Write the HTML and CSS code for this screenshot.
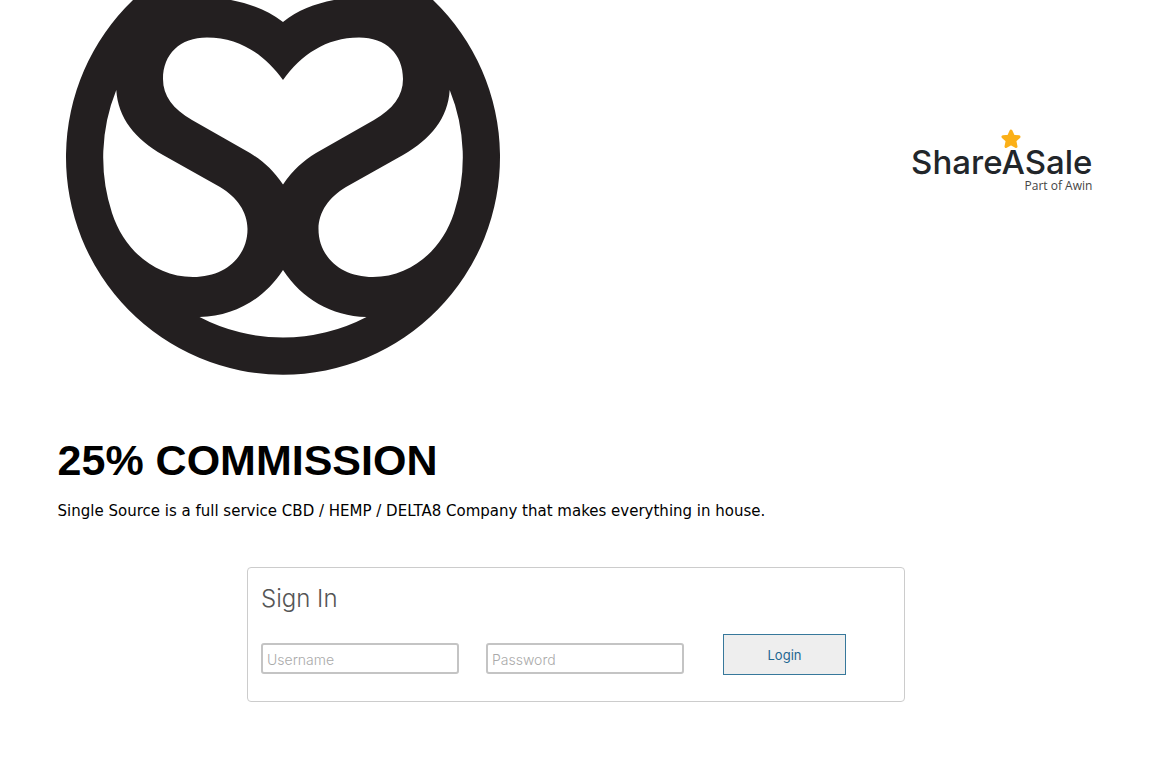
FILE: index.html
```
<!DOCTYPE html>
<html lang="en">
<head>
<meta charset="utf-8">
<title>Single Source | ShareASale</title>
<link rel="stylesheet" href="styles.css">
</head>
<body>
<div class="page">
  <header class="header">
    <svg class="merchant-logo" viewBox="0 0 450 376" role="img" aria-label="Single Source">
      <path fill="#231f20" fill-rule="evenodd" d="M75 0A217 217.500 0 1 0 375 0H276C256 4 240 10 225 22C209 10 193 4 173 0Z
        M225 80C207 55 182 37.500 149 37.500C122 37.500 105 54 105 79C105 96 115 109 134 120L192 153C205 161 215 170 225 184.500C235 170 245 161 258 153L316 120C335 109 345 96 345 79C345 54 328 37.500 301 37.500C268 37.500 243 55 225 80Z
        M58.300 90A180 180 0 0 0 54 213C66 250 97 277 135 277C168 277 189.500 256 189.500 229C189.500 212 179 197 162 187L105 155C77 139 60 118 58.300 90Z
        M391.700 90A180 180 0 0 1 396 213C384 250 353 277 315 277C282 277 260.500 256 260.500 229C260.500 212 271 197 288 187L345 155C373 139 390 118 391.700 90Z
        M225 270C206 299 177 316 141.500 317A180 180 0 0 0 308.500 317C273 316 244 299 225 270Z"/>
    </svg>
    <div class="network">
      <svg class="star" viewBox="0 0 20 20" aria-hidden="true">
        <path d="M10 2L12.300 7.200L18 7.800L13.800 11.600L15 17.500L10 14.700L5 17.500L6.200 11.600L2 7.800L7.700 7.200Z" fill="#fbb018" stroke="#fbb018" stroke-width="3" stroke-linejoin="round"/>
      </svg>
      <div class="network-name">ShareASale</div>
      <div class="network-note">Part of Awin</div>
    </div>
  </header>
  <main>
    <h1 class="offer">25% COMMISSION</h1>
    <p class="summary">Single Source is a full service CBD / HEMP / DELTA8 Company that makes everything in house.</p>
    <form class="signin">
      <h2 class="signin-title">Sign In</h2>
      <div class="signin-row">
        <input class="field" type="text" placeholder="Username" aria-label="Username">
        <input class="field" type="password" placeholder="Password" aria-label="Password">
        <button class="login" type="button">Login</button>
      </div>
    </form>
  </main>
</div>
</body>
</html>
```
FILE: styles.css
```
* { box-sizing: border-box; }
body {
  margin: 0;
  background: #fff;
  color: #000;
  font-family: Verdana, "DejaVu Sans", sans-serif;
}
.page { padding: 0 5%; }
.header {
  display: flex;
  justify-content: space-between;
  align-items: flex-start;
}
.merchant-logo { display: block; width: 450px; height: 376px; }
.network {
  display: flex;
  flex-direction: column;
  align-items: flex-end;
  margin-top: 129px;
  padding-right: 2px;
}
.star { display: block; width: 20px; height: 20px; margin-right: 71px; }
.network-name {
  margin-top: -2px;
  font: 500 33px/30px Inter, sans-serif;
  color: #22262a;
}
.network-note {
  margin-top: 2px;
  font: 12px/14px "Open Sans", sans-serif;
  color: #444;
}
.offer {
  margin: 58px 0 0;
  font: bold 43px/52px "Liberation Sans", Arial, sans-serif;
}
.summary {
  margin: 15px 0 0;
  font-size: 15px;
  line-height: 20px;
}
.signin {
  width: 658px;
  max-width: 100%;
  margin: 46px auto 0;
  padding: 14px 13px;
  border: 1px solid #ccc;
  border-radius: 4px;
  font-family: Inter, sans-serif;
}
.signin-title {
  margin: 0;
  font-size: 24px;
  font-weight: 300;
  line-height: 34px;
  color: #555;
}
.signin-row {
  display: flex;
  align-items: center;
  margin-top: 18px;
  padding-bottom: 12px;
}
.field {
  width: 198px;
  height: 31px;
  margin: 8px 27px 0 0;
  padding: 2px 4px 0;
  border: 2px solid #c4c4c4;
  border-radius: 3px;
  font: 300 14px/20px Inter, sans-serif;
}
.field::placeholder { color: #aaa; opacity: 1; }
.login {
  width: 123px;
  height: 41px;
  margin-left: 12px;
  border: 1px solid #37789b;
  background: #eee;
  color: #1f6791;
  font: 13px/20px Inter, sans-serif;
}
```
